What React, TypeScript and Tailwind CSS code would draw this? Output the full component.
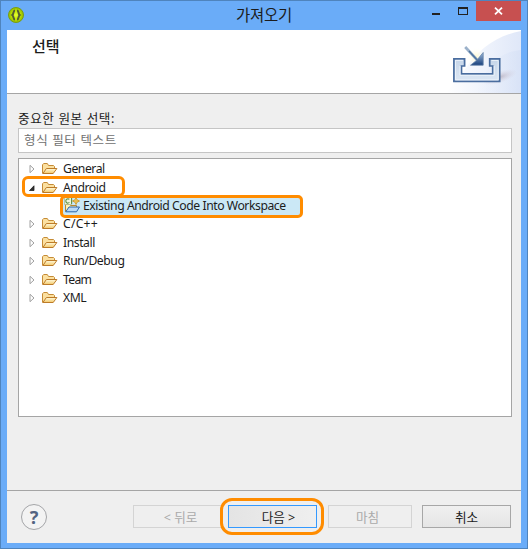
import React from 'react';

const Folder = () => (
  <svg width="16" height="14" viewBox="0 0 16 14" className="block shrink-0">
    <defs>
      <linearGradient id="folderFill" x1="0" y1="0" x2="0" y2="1">
        <stop offset="0" stopColor="#fffbe0" />
        <stop offset="1" stopColor="#f3c868" />
      </linearGradient>
    </defs>
    <path d="M.5 11.5V2.8L1.7 1.5h3.6l1.2 2h5l1 1v2" fill="#fbe0a0" stroke="#c58b35" />
    <path d="M.9 11.5 4.4 6.5H14.9L11.2 11.5Z" fill="url(#folderFill)" stroke="#bd7b28" />
  </svg>
);

const NewProject = () => (
  <svg width="17" height="17" viewBox="0 0 17 17" className="block shrink-0">
    <path d="M1.5 14.5V7.5h4l1 1h6v2" fill="#fff3b5" stroke="#b88730" />
    <path d="M1.7 14.8 5 10h10.5l-3 4.8Z" fill="#b9d9f7" stroke="#2d65a8" />
    <path d="M.5 .5h7v7h-7z" fill="#f1f5dc" stroke="#a7b58b" strokeWidth=".7" />
    <path d="M5.4 2.3C3.8 1.2 1.8 2.2 1.8 4s1.9 2.8 3.6 1.4M7.6 0v7" fill="none" stroke="#5c9149" strokeWidth="1.1" />
    <path d="m12 .5 1 2.3 2.5 1.2-2.5 1.2-1 2.3-1-2.3L8.5 4 11 2.8Z" fill="#fff3a1" stroke="#c48a17" strokeWidth=".8" />
    <path d="M12 2v4M10 4h4" stroke="#d99e21" strokeWidth=".8" />
  </svg>
);

const Expander = ({ open }: { open?: boolean }) => (
  <svg width="8" height="10" viewBox="0 0 8 10" className="block shrink-0">
    {open ? <path d="M5 2.8v4.7H.5Z" fill="#303030" stroke="#222" strokeWidth=".8" /> : <path d="M1 1.3v7.4L5 5Z" fill="#fff" stroke="#a0a0a0" />}
  </svg>
);

const Row = ({ label, open, spacing = 'tracking-[-0.45px]' }: { label: string; open?: boolean; spacing?: string }) => (
  <div className="flex h-[18.4px] items-center pl-[10px]">
    <Expander open={open} />
    <div className="ml-[5px]"><Folder /></div>
    <span className={`ml-[5px] text-[12.2px] leading-[18px] ${spacing}`}>{label}</span>
  </div>
);

const HeaderArt = () => (
  <svg width="90" height="63" viewBox="431 30 90 63" className="block">
    <defs>
      <linearGradient id="haze" x1="0" y1="0" x2="1" y2="0">
        <stop offset="0" stopColor="#fff" />
        <stop offset="1" stopColor="#dce5f8" />
      </linearGradient>
      <linearGradient id="swoop" x1="0" y1="0" x2="1" y2="0">
        <stop offset="0" stopColor="#e6edfb" stopOpacity="0" />
        <stop offset="1" stopColor="#d3dff5" />
      </linearGradient>
      <linearGradient id="tray" x1="0" y1="0" x2="0" y2="1">
        <stop offset="0" stopColor="#c5d5e9" />
        <stop offset="1" stopColor="#dce7f4" />
      </linearGradient>
      <linearGradient id="arrow" x1="0" y1="0" x2="0" y2="1">
        <stop offset="0" stopColor="#9fbbdc" />
        <stop offset="1" stopColor="#173f7b" />
      </linearGradient>
      <radialGradient id="shade">
        <stop offset="0" stopColor="#a89ba9" stopOpacity=".6" />
        <stop offset="1" stopColor="#d6cddb" stopOpacity="0" />
      </radialGradient>
      <radialGradient id="glow">
        <stop offset="0" stopColor="#fffbd0" />
        <stop offset="1" stopColor="#fff" stopOpacity="0" />
      </radialGradient>
    </defs>
    <path d="M521 31C498 35 477 50 466 68L446 93H521Z" fill="url(#haze)" opacity=".9" />
    <path d="M521 50C501 52 487 62 476 93H521Z" fill="url(#swoop)" opacity=".6" />
    <ellipse cx="500" cy="77" rx="18" ry="6" fill="url(#shade)" transform="rotate(-18 500 77)" />
    <circle cx="476" cy="57" r="10" fill="url(#glow)" />
    <path d="M453.9 58.9H464.6V66H461.5V73.8H492.7V66H489.7V58.9H499.7V81.4H453.9Z" fill="url(#tray)" stroke="#4a6d9f" strokeWidth="1.7" />
    <path d="M455.5 60.4H463M455.5 60V79.8H498.2V60.5H491.5M460 66V75.3H494.2V66" stroke="#edf4fb" strokeWidth=".9" fill="none" />
    <path d="m465.2 47 12 13" stroke="#9bb1ca" strokeWidth="2.7" />
    <path d="m469 51 9 10" stroke="#4c729d" strokeWidth="1.4" />
    <path d="M483.2 52.5V65.2H470.5L477 60Z" fill="url(#arrow)" stroke="#6484aa" strokeWidth=".8" />
  </svg>
);

export default function App() {
  return (
    <div className="relative flex h-[549px] w-[528px] flex-col border border-[#4f84bd] bg-[#6aacf8] px-[6px] pb-[5px] font-['Noto_Sans','Noto_Sans_CJK_KR',sans-serif] text-[#1c1c1c]">
      <header className="flex h-[29px] shrink-0 items-start">
        <svg width="17" height="17" viewBox="0 0 17 17" className="mt-[6px] ml-px block">
          <defs><radialGradient id="logo"><stop offset="0" stopColor="#e6ff32" /><stop offset=".6" stopColor="#bce000" /><stop offset="1" stopColor="#91b900" /></radialGradient></defs>
          <circle cx="8" cy="8" r="7.5" fill="url(#logo)" stroke="#789d16" />
          <path d="M7 3.5C5 3.5 6 6.8 4.3 8 6 9.2 5 12.5 7 12.5M9 3.5c2 0 1 3.3 2.7 4.5-1.7 1.2-.7 4.5-2.7 4.5" fill="none" stroke="#535c33" strokeWidth="2" />
        </svg>
        <h1 className="ml-[211px] w-[70px] whitespace-nowrap text-[15.5px] leading-[29px] tracking-[-0.3px]">가져오기</h1>
        <div className="ml-auto flex h-[20px]">
          <div className="mt-[12px] mr-[18px] h-[2px] w-[8px] bg-[#222]" />
          <div className="mt-[6px] mr-[8px] h-[8px] w-[10px] border border-t-2 border-[#222]" />
          <div className="flex w-[45px] items-center justify-center bg-[#c75050]">
            <svg width="9" height="8" viewBox="0 0 9 8"><path d="m1 .7 7 6.6M8 .7 1 7.3" stroke="#fff" strokeWidth="1.8" /></svg>
          </div>
        </div>
      </header>
      <main className="flex h-[513px] shrink-0 flex-col bg-[#efefef]">
        <section className="flex h-[64px] shrink-0 justify-between border-b border-[#a5a5a5] bg-white">
          <h2 className="mt-[7px] ml-[25px] text-[15px] leading-[18px] font-medium">선택</h2>
          <HeaderArt />
        </section>
        <section className="flex h-[396px] shrink-0 flex-col pr-[9px] pl-[11px]">
          <label className="mt-[15px] h-[18px] text-[12.6px] leading-[20px] tracking-[0.6px]">중요한 원본 선택:</label>
          <div className="mt-px flex h-[25px] items-center border border-[#c5c5c5] bg-white pl-[5px] text-[12.5px] tracking-[0.65px] text-[#707070]"><span className="mt-px">형식 필터 텍스트</span></div>
          <div className="mt-[5px] h-[259px] border border-[#a5a5a5] bg-white pt-px">
            <Row label="General" />
            <Row label="Android" open />
            <div className="flex h-[18.4px] items-center pl-[44px]">
              <div className="flex h-[19px] w-[238px] shrink-0 items-center bg-[#cbe8f6] pl-px">
                <NewProject />
                <span className="ml-[2px] whitespace-nowrap text-[12.2px] leading-[18px] tracking-[-0.45px]">Existing Android Code Into Workspace</span>
              </div>
            </div>
            <Row label="C/C++" spacing="tracking-[0.2px]" />
            <Row label="Install" />
            <Row label="Run/Debug" />
            <Row label="Team" spacing="tracking-[-0.7px]" />
            <Row label="XML" />
          </div>
        </section>
        <footer className="flex h-[53px] shrink-0 items-start border-t border-[#a5a5a5] pl-[14px]">
          <div className="mt-[13px] flex size-[26px] items-center justify-center rounded-full border border-[#a4a5a8] bg-[#f3f3f3] text-[18px] font-bold text-[#526381]">?</div>
          <div className="mt-[14px] ml-[86px] flex h-[23px] text-[12.6px] leading-[23px]">
            <button className="w-[90px] border border-[#d4d4d4] pl-[5px] text-[#aaa]">&lt; 뒤로</button>
            <button className="ml-[5px] w-[89px] border border-[#3399ff] bg-linear-to-r from-[#e4e4e4] to-[#efefef] pl-[12px]">다음 &gt;</button>
            <button className="ml-[11px] w-[84px] border border-[#d4d4d4] pr-[5px] text-[#aaa]">마침</button>
            <button className="ml-[10px] w-[89px] border border-[#a7a7a7] bg-linear-to-b from-[#f0f0f0] to-[#e5e5e5]">취소</button>
          </div>
        </footer>
      </main>
      <div className="absolute top-[175px] left-[21px] h-[21px] w-[103px] rounded-[6px] border-3 border-[#ff8c00]" />
      <div className="absolute top-[194px] left-[59px] h-[23px] w-[243px] rounded-[5px] border-3 border-[#ff8c00]" />
      <div className="absolute top-[497px] left-[219px] h-[37px] w-[104px] rounded-[12px] border-3 border-[#ff8c00]" />
    </div>
  );
}
